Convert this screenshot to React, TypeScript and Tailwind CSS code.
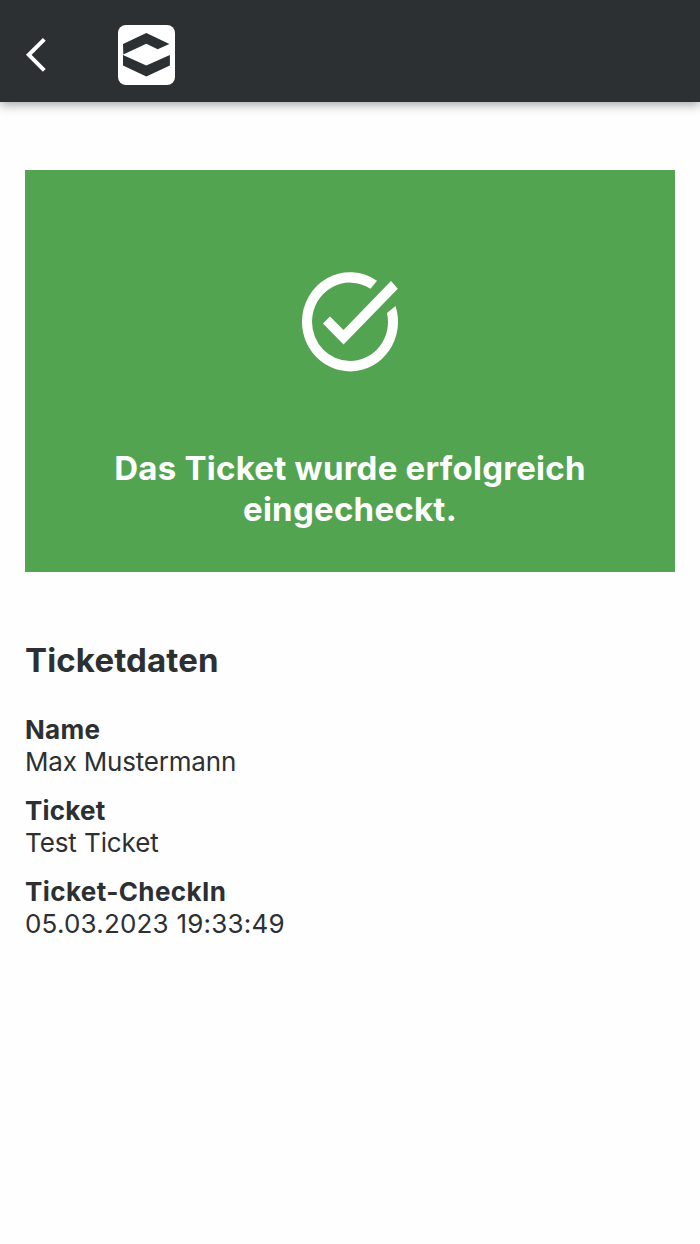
const TICKET_DATA = [
  { label: "Name", value: "Max Mustermann", labelClass: "tracking-[0.3px]", valueClass: "tracking-[-0.2px]" },
  { label: "Ticket", value: "Test Ticket", labelClass: "tracking-[0.2px]", valueClass: "tracking-[-0.1px]" },
  { label: "Ticket-CheckIn", value: "05.03.2023 19:33:49", labelClass: "tracking-[0.4px]", valueClass: "tracking-[0.2px]" },
];

function Header() {
  return (
    <header className="h-[102px] bg-[#2d3033] flex items-start shadow-[0_3px_10px_rgba(0,0,0,0.35)]">
      <button type="button" aria-label="Zurück" className="ml-6 mt-[35px]">
        <svg className="w-6 h-10 block" viewBox="0 0 24 40" fill="none">
          <path d="M20.3 4.3 4.8 19.8 20.3 35.3" stroke="white" strokeWidth="4" />
        </svg>
      </button>
      <Logo />
    </header>
  );
}

function Logo() {
  return (
    <div className="ml-[70px] mt-[25px] w-[57px] h-[60px] rounded-[8px] bg-white">
      <svg className="w-[57px] h-[60px] block" viewBox="0 0 57 60" fill="#2d3033">
        <path d="M5 19 28.3 8 51.4 19 39.7 24.3 28.3 18.8 5.3 29.5Z" />
        <path d="M5 30 28.3 40.5 51.9 30V40.6L28.3 51.5 5 40.6Z" />
      </svg>
    </div>
  );
}

function SuccessIcon() {
  return (
    <svg className="w-[100px] h-[104px] block" viewBox="300 270 100 104" fill="white">
      <path d="M377 280.8A48 49.6 0 0 0 302 321.8A48 49.6 0 0 0 350 371.4A48 49.6 0 0 0 395.5 306L387 312.9A38 39.2 0 0 1 350 361A38 39.2 0 0 1 312 321.8A38 39.2 0 0 1 370.5 288.8Z" />
      <path d="M330 316.5 323 323.5 343.5 344.5 397.8 288.7 391 281 343.5 330Z" />
    </svg>
  );
}

export default function App() {
  return (
    <div className="min-h-[1244px] bg-[#fefefe] text-[#2d3033] font-['Inter',sans-serif]">
      <Header />

      <main className="px-[25px] pt-[68px]">
        {/* Status */}
        <section className="h-[402px] bg-[#53a451] flex flex-col items-center pt-[100px]">
          <SuccessIcon />
          <p className="mt-[74px] text-center text-white text-[33px] font-bold leading-[40.5px] tracking-[0.25px]">
            Das Ticket wurde erfolgreich
            <br />
            eingecheckt.
          </p>
        </section>

        {/* Details */}
        <section className="pt-[68px]">
          <h2 className="text-[33px] font-bold leading-10 tracking-[0.15px]">Ticketdaten</h2>
          <dl className="mt-[34px] space-y-[17px]">
            {TICKET_DATA.map(item => (
              <div key={item.label} className="text-[26px] leading-8">
                <dt className={`font-bold ${item.labelClass}`}>{item.label}</dt>
                <dd className={item.valueClass}>{item.value}</dd>
              </div>
            ))}
          </dl>
        </section>
      </main>
    </div>
  );
}
